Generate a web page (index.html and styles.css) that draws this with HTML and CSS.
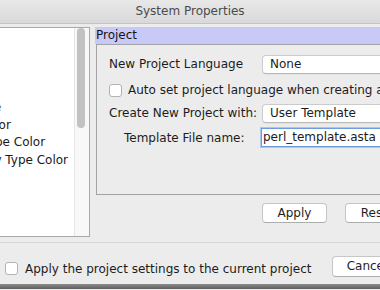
FILE: index.html
```html
<!DOCTYPE html>
<html>
<head>
<meta charset="utf-8">
<link rel="stylesheet" href="styles.css">
</head>
<body>
<div class="window">
  <div class="titlebar">System Properties</div>
  <div class="main">
    <div class="list">
      <div class="items">
        <div class="item">Basic</div>
        <div class="item">Class</div>
        <div class="item">Note</div>
        <div class="item">Font</div>
        <div class="item">Default Type</div>
        <div class="item">Package Color</div>
        <div class="item">Message Type Color</div>
        <div class="item">Dependency Type Color</div>
        <div class="item">Default Rule</div>
        <div class="item">Default Rule</div>
        <div class="item">Default Rule</div>
      </div>
      <div class="scrollbar"><div class="thumb"></div></div>
    </div>
    <div class="right">
      <div class="header">Project</div>
      <div class="box">
        <div class="row r1"><span class="label">New Project Language</span><div class="combo">None</div></div>
        <div class="row r2"><span class="checkbox"></span><span class="check-text">Auto set project language when creating a new project</span></div>
        <div class="row r3"><span class="label">Create New Project with:</span><div class="combo">User Template</div></div>
        <div class="row r4"><span class="label label-indent">Template File name:</span><div class="field">perl_template.asta</div></div>
      </div>
      <div class="actions"><div class="btn apply">Apply</div><div class="btn reset">Reset</div></div>
    </div>
  </div>
  <div class="footer">
    <span class="checkbox footer-check"></span>
    <span class="footer-label">Apply the project settings to the current project</span>
    <div class="btn cancel">Cancel</div>
  </div>
  <div class="edge"></div>
</div>
</body>
</html>
```
FILE: styles.css
```css
html, body {
  margin: 0;
  padding: 0;
}
body {
  width: 380px;
  height: 290px;
  overflow: hidden;
  background: #ececec;
  font-family: "DejaVu Sans", "Liberation Sans", sans-serif;
  font-size: 12px;
  color: #1c1c1c;
}
.window {
  width: 380px;
  height: 290px;
  overflow: hidden;
  display: flex;
  flex-direction: column;
}
.titlebar {
  height: 23px;
  line-height: 23px;
  flex-shrink: 0;
  text-align: center;
  color: #4b4b4b;
  background: linear-gradient(#e8e8e8, #d9d9d9);
  border-bottom: 1px solid #c4c4c4;
}
.main {
  height: 218px;
  flex-shrink: 0;
  box-sizing: border-box;
  padding-top: 3px;
  display: flex;
  align-items: flex-start;
  overflow: hidden;
}
.list {
  margin-left: -1px;
  width: 91px;
  height: 210px;
  box-sizing: border-box;
  border: 1px solid #a9a9a9;
  background: #fff;
  display: flex;
  flex-shrink: 0;
}
.items {
  flex: 1;
  overflow: hidden;
  padding-top: 1px;
}
.item {
  margin-left: -74px;
  white-space: nowrap;
  line-height: 17.5px;
  color: #1a1a1a;
}
.scrollbar {
  width: 14px;
  border-left: 1px solid #e6e6e6;
  background: #f8f8f8;
}
.thumb {
  width: 8px;
  height: 100px;
  margin-left: 2px;
  border-radius: 4px;
  background: #c2c2c2;
}
.right {
  margin-left: 5px;
  width: 320px;
  flex-shrink: 0;
}
.header {
  height: 17px;
  line-height: 17px;
  padding-left: 1px;
  background: #c9c9f8;
  color: #141414;
}
.box {
  margin-left: 1px;
  height: 151px;
  box-sizing: border-box;
  border: 1px solid #a3a3a3;
  padding-top: 9px;
  padding-left: 12px;
}
.row {
  display: flex;
  align-items: center;
  white-space: nowrap;
}
.r1 { height: 20px; }
.r2 { height: 20px; margin-top: 6px; }
.r3 { height: 20px; margin-top: 3px; }
.r4 { height: 21px; margin-top: 4px; }
.label {
  width: 153px;
  flex-shrink: 0;
}
.label-indent {
  margin-left: 15px;
  width: 136px;
}
.combo {
  width: 200px;
  height: 19px;
  line-height: 17px;
  box-sizing: border-box;
  padding-left: 7px;
  background: #fff;
  border: 1px solid #cbcbcb;
  border-bottom-color: #b8b8b8;
  border-radius: 4px;
  box-shadow: 0 1px 0 rgba(0,0,0,0.04);
}
.checkbox {
  width: 13px;
  height: 13px;
  box-sizing: border-box;
  border: 1px solid #b3b3b3;
  border-radius: 3px;
  background: #fff;
  flex-shrink: 0;
}
.check-text {
  margin-left: 6px;
}
.field {
  margin-left: 1px;
  width: 200px;
  height: 19px;
  line-height: 17px;
  box-sizing: border-box;
  padding-left: 1px;
  background: #fff;
  border: 1px solid #6f9ddb;
  box-shadow: 0 0 0 1px #a9c6ee;
}
.actions {
  display: flex;
  margin-top: 8px;
  margin-left: 167px;
  gap: 18px;
}
.btn {
  height: 20px;
  line-height: 18px;
  box-sizing: border-box;
  text-align: center;
  background: #fff;
  border: 1px solid #c6c6c6;
  border-bottom-color: #adadad;
  border-radius: 4px;
  color: #1e1e1e;
  flex-shrink: 0;
}
.apply { width: 65px; }
.reset { width: 65px; }
.footer {
  height: 42px;
  flex-shrink: 0;
  box-sizing: border-box;
  border-top: 1px solid #d8d8d8;
  padding-top: 10px;
  display: flex;
  align-items: center;
  white-space: nowrap;
}
.footer-check {
  margin-left: 5px;
}
.footer-label {
  margin-left: 7px;
  width: 307px;
  flex-shrink: 0;
}
.cancel {
  width: 70px;
  height: 21px;
  line-height: 19px;
  margin-bottom: 4px;
}
.edge {
  height: 5px;
  flex-shrink: 0;
  background: linear-gradient(#8c8c8c, #5e5e5e);
}
```
